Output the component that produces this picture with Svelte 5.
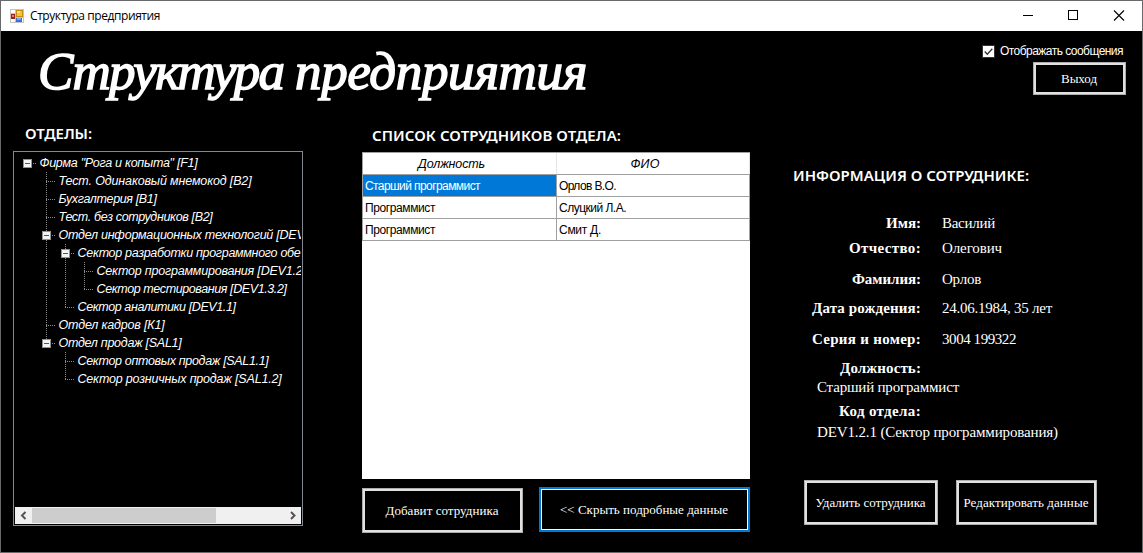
<script>
  // Spreads the letters of a label over the given width.
  function fit(node, width) {
    node.style.letterSpacing = '0px';
    const natural = node.getBoundingClientRect().width;
    node.style.letterSpacing = `${(width - natural) / node.textContent.length}px`;
  }

  // Guides: ' ' empty, '|' passing line, 't' branch, 'l' last branch, 'T' / 'L' the same with a toggle, 'R' root toggle.
  const tree = [
    { guides: 'R', text: 'Фирма "Рога и копыта" [F1]', width: 158 },
    { guides: ' t', text: 'Тест. Одинаковый мнемокод [B2]', width: 193 },
    { guides: ' t', text: 'Бухгалтерия [B1]', width: 98 },
    { guides: ' t', text: 'Тест. без сотрудников [B2]', width: 154 },
    { guides: ' T', text: 'Отдел информационных технологий [DEV', width: 246 },
    { guides: ' |T', text: 'Сектор разработки программного обе', width: 223 },
    { guides: ' ||t', text: 'Сектор программирования [DEV1.2', width: 206 },
    { guides: ' ||l', text: 'Сектор тестирования [DEV1.3.2]', width: 190 },
    { guides: ' |l', text: 'Сектор аналитики [DEV1.1]', width: 158 },
    { guides: ' t', text: 'Отдел кадров [К1]', width: 106 },
    { guides: ' L', text: 'Отдел продаж [SAL1]', width: 123 },
    { guides: '  t', text: 'Сектор оптовых продаж [SAL1.1]', width: 191 },
    { guides: '  l', text: 'Сектор розничных продаж [SAL1.2]', width: 204 }
  ];

  const staff = [
    { post: 'Старший программист', pw: 115, name: 'Орлов В.О.', nw: 57 },
    { post: 'Программист', pw: 70, name: 'Слуцкий Л.А.', nw: 67 },
    { post: 'Программист', pw: 70, name: 'Смит Д.', nw: 42 }
  ];

  const info = [
    { label: 'Имя:', lw: 35, value: 'Василий', vw: 53, h: 25 },
    { label: 'Отчество:', lw: 72, value: 'Олегович', vw: 60, h: 31 },
    { label: 'Фамилия:', lw: 69, value: 'Орлов', vw: 39, h: 29 },
    { label: 'Дата рождения:', lw: 109, value: '24.06.1984, 35 лет', vw: 110, h: 31 },
    { label: 'Серия и номер:', lw: 109, value: '3004 199322', vw: 74, h: 29 },
    { label: 'Должность:', lw: 81, h: 19 }
  ];
</script>

<div class="window">
  <div class="titlebar">
    <svg class="app-icon" width="14" height="14" viewBox="0 0 14 14" shape-rendering="crispEdges">
      <rect width="14" height="14" fill="#c4c4c4" />
      <rect x="1" y="1" width="4" height="3" fill="#fff" />
      <rect x="1" y="10" width="4" height="3" fill="#fff" />
      <rect x="12" y="9" width="1" height="4" fill="#fff" />
      <rect x="1" y="5" width="4" height="5" fill="#a02018" />
      <rect x="2" y="6" width="2" height="2" fill="#e88074" />
      <rect x="6" y="1" width="7" height="7" fill="#c98a10" />
      <rect x="7" y="2" width="5" height="5" fill="#f8c437" />
      <rect x="7" y="2" width="3" height="2" fill="#ffe48a" />
      <rect x="6" y="9" width="6" height="4" fill="#3a6fd0" />
      <rect x="7" y="9" width="4" height="2" fill="#78aaf4" />
    </svg>
    <span class="caption"><span use:fit={130}>Структура предприятия</span></span>
    <svg class="controls" width="138" height="30" viewBox="0 0 138 30" fill="none" stroke="#000">
      <path d="M19 14.500h10M64.500 9.500h9v9h-9z" shape-rendering="crispEdges" />
      <path d="M110 9.500l10 10M120 9.500l-10 10" stroke-width="1.100" />
    </svg>
  </div>

  <header>
    <h1><span use:fit={257}>{'Структура '}</span><span use:fit={292}>предприятия</span></h1>
    <div class="session">
      <label>
        <svg width="13" height="13" viewBox="0 0 13 13">
          <rect x=".5" y=".5" width="12" height="12" fill="#fff" stroke="#333" />
          <path d="M2.700 6.500l2.600 2.700 5-5.400" fill="none" stroke="#333" stroke-width="1.300" />
        </svg>
        <span use:fit={123}>Отображать сообщения</span>
      </label>
      <button class="exit"><span use:fit={36}>Выход</span></button>
    </div>
  </header>

  <main>
    <section class="departments">
      <h2><span use:fit={67}>ОТДЕЛЫ:</span></h2>
      <div class="tree">
        {#each tree as row}
          <div class="node">
            {#each row.guides as g}
              <svg width="19" height="18" viewBox="0 0 19 18" shape-rendering="crispEdges">
                <g stroke="#8a8a8a" stroke-dasharray="1 1">
                  {#if '|tT'.includes(g)}<path d="M9.500 0v18" />{/if}
                  {#if 'lL'.includes(g)}<path d="M9.500 0v10" />{/if}
                  {#if 'tTlLR'.includes(g)}<path d="M9 9.500h10" />{/if}
                </g>
                {#if 'TLR'.includes(g)}
                  <rect x="5.500" y="5.500" width="8" height="8" fill="#f4f4f4" stroke="#919191" />
                  <path d="M7 9.500h5" stroke="#3a56a8" />
                {/if}
              </svg>
            {/each}
            <span class="name" use:fit={row.width}>{row.text}</span>
          </div>
        {/each}
        <div class="scrollbar">
          <svg width="17" height="17" viewBox="0 0 17 17"><path d="M10.500 5L7 8.500l3.500 3.500" /></svg>
          <div class="track"><div class="thumb"></div></div>
          <svg width="17" height="17" viewBox="0 0 17 17"><path d="M7 5l3.500 3.500L7 12" /></svg>
        </div>
      </div>
    </section>

    <section class="staff">
      <h2><span use:fit={249}>СПИСОК СОТРУДНИКОВ ОТДЕЛА:</span></h2>
      <div class="grid">
        <div class="row head">
          <div class="cell"><span use:fit={67}>Должность</span></div>
          <div class="cell"><span use:fit={29}>ФИО</span></div>
        </div>
        {#each staff as s, i}
          <div class="row">
            <div class="cell" class:selected={i === 0}><span use:fit={s.pw}>{s.post}</span></div>
            <div class="cell"><span use:fit={s.nw}>{s.name}</span></div>
          </div>
        {/each}
      </div>
      <div class="actions">
        <button class="add"><span use:fit={113}>Добавит сотрудника</span></button>
        <button class="toggle"><span use:fit={168}>&lt;&lt; Скрыть подробные данные</span></button>
      </div>
    </section>

    <section class="details">
      <h2><span use:fit={236}>ИНФОРМАЦИЯ О СОТРУДНИКЕ:</span></h2>
      <div class="fields">
        {#each info as f}
          <div class="field" style="height: {f.h}px">
            <b><span use:fit={f.lw}>{f.label}</span></b>
            {#if f.value}<span class="value" use:fit={f.vw}>{f.value}</span>{/if}
          </div>
        {/each}
        <div class="wide post"><span use:fit={142}>Старший программист</span></div>
        <div class="field code"><b><span use:fit={82}>Код отдела:</span></b></div>
        <div class="wide"><span use:fit={241}>DEV1.2.1 (Сектор программирования)</span></div>
      </div>
      <div class="actions">
        <button class="remove"><span use:fit={110}>Удалить сотрудника</span></button>
        <button class="edit"><span use:fit={125}>Редактировать данные</span></button>
      </div>
    </section>
  </main>
</div>

<style>
  :global(body) { margin: 0; background: #000; overflow: hidden; }
  .window {
    box-sizing: border-box; width: 1143px; height: 553px; border: 1px solid #69696b;
    background: #000; color: #fff; display: flex; flex-direction: column; overflow: hidden;
    font-family: "Liberation Sans", sans-serif; font-size: 12px;
  }
  span { white-space: pre; }
  svg { flex: none; display: block; }
  .titlebar { height: 30px; flex: none; background: #fff; color: #000; display: flex; align-items: center; }
  .app-icon { margin: 0 6px 1px 9px; }
  .caption { font: 12px/28px "Open Sans", sans-serif; flex: 1; }
  header { height: 90px; flex: none; display: flex; justify-content: space-between; }
  h1 { margin: 6px 0 0 37px; font: italic 400 53px/68px "Liberation Serif", serif; -webkit-text-stroke: 1.500px #fff; }
  .session { display: flex; flex-direction: column; align-items: flex-end; padding: 12px 16px 0 0; }
  label { display: flex; align-items: center; gap: 5px; height: 16px; margin: 0 3px 3px 0; }
  button {
    box-sizing: border-box; padding: 0 1px 0 0; height: 45px; background: #000; color: #fff;
    border: 1px solid #adadad; box-shadow: inset 0 0 0 2px #e1e1e1;
    font: 13px/16px "Liberation Serif", serif; display: flex; align-items: center; justify-content: center;
  }
  .exit { width: 93px; height: 33px; }
  main { flex: 1; display: grid; grid-template-columns: 361px 388px 1fr; }
  h2 { margin: 0; font: 600 15px/20px "Noto Sans", sans-serif; }
  .departments h2 { padding: 2px 0 8px 24px; }
  .tree {
    box-sizing: border-box; width: 290px; height: 375px; margin-left: 12px; border: 1px solid #828790;
    padding: 2px 1px 1px; display: flex; flex-direction: column; overflow: hidden;
  }
  .node { display: flex; height: 18px; padding-left: 3px; overflow: hidden; }
  .name { flex: none; margin-left: 2.500px; font: italic 12.500px/18px "Liberation Sans", sans-serif; }
  .scrollbar { display: flex; height: 17px; margin-top: auto; background: #f0f0f0; }
  .scrollbar path { fill: none; stroke: #555; stroke-width: 2; }
  .track { flex: 1; padding: 1px 0; }
  .thumb { width: 184px; height: 15px; background: #cdcdcd; }
  .staff h2 { padding: 4px 0 7px 10px; }
  .grid { box-sizing: border-box; height: 327px; background: #fff; color: #000; }
  .row { display: grid; grid-template-columns: 195px 193px; height: 22px; border-bottom: 1px solid #a0a0a0; box-sizing: border-box; }
  .head { height: 23px; border-top: 1px solid #a0a0a0; font-size: 12.500px; font-style: italic; }
  .cell { border-right: 1px solid #a0a0a0; padding-left: 2px; line-height: 22px; overflow: hidden; }
  .cell:first-child { border-left: 1px solid #a0a0a0; }
  .head .cell { text-align: center; padding: 0 16px 0 0; line-height: 23px; border-right-color: #e5e5e5; }
  .selected { background: #0078d7; color: #fff; }
  .staff .actions { display: flex; justify-content: space-between; padding-top: 8px; }
  .add { width: 161px; margin-top: 1px; }
  .toggle { width: 211px; border: 2px solid #0078d7; box-shadow: inset 0 0 0 1px #fff; }
  .details h2 { padding: 44px 0 28px 43px; }
  .fields { font: 15px/20px "Liberation Serif", serif; height: 267px; }
  .field { display: flex; }
  .field b { width: 171px; text-align: right; }
  .value { margin-left: 21px; }
  .wide { padding-left: 67px; }
  .post { height: 24px; }
  .code { height: 21px; }
  .details .actions { display: flex; gap: 18px; padding-left: 54px; }
  .remove { width: 134px; }
  .edit { width: 141px; }
</style>
